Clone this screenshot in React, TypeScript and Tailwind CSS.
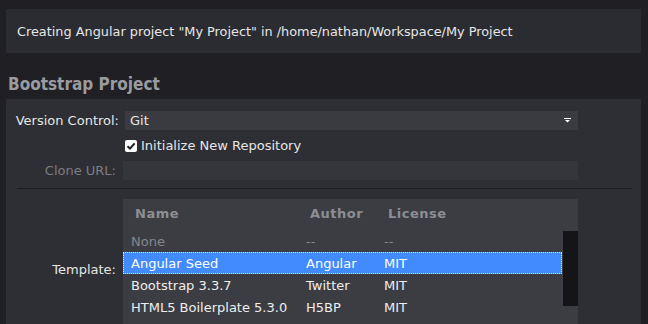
import React from "react"

const FONT = { fontFamily: '"DejaVu Sans", "Noto Sans", sans-serif' }
const HEAD = { fontFamily: '"DejaVu Sans Condensed", "Liberation Sans Narrow", "DejaVu Sans", sans-serif' }

const rows = [
  { name: "None", author: "--", license: "--", muted: true },
  { name: "Angular Seed", author: "Angular", license: "MIT", selected: true },
  { name: "Bootstrap 3.3.7", author: "Twitter", license: "MIT" },
  { name: "HTML5 Boilerplate 5.3.0", author: "H5BP", license: "MIT" },
]

function Caret() {
  return (
    <svg width="7" height="5" viewBox="0 0 7 5" className="shrink-0">
      <rect x="0" y="0" width="7" height="1" fill="#ffffff" />
      <path d="M1 2 H6 L3.5 4.5 Z" fill="#ffffff" />
    </svg>
  )
}

function CheckBox() {
  return (
    <div className="w-[12px] h-[12px] rounded-[2px] bg-white flex items-center justify-center">
      <svg width="10" height="10" viewBox="0 0 10 10">
        <path d="M1.5 5.2 L4 7.6 L8.6 2.4" stroke="#1c1c20" strokeWidth="2" fill="none" />
      </svg>
    </div>
  )
}

export default function App() {
  return (
    <div
      className="w-[648px] h-[324px] overflow-hidden bg-[#202024] flex flex-col text-[13px] text-[#e6e6e6]"
      style={FONT}
    >
      {/* Status */}
      <div className="mt-[9px] ml-[6px] mr-[7px] h-[44px] bg-[#2b2c31] flex items-center pl-[11px] pt-[2px] shrink-0 text-[12.85px]">
        Creating Angular project "My Project" in /home/nathan/Workspace/My Project
      </div>

      {/* Heading */}
      <div className="h-[46px] flex items-end pb-[2px] pl-[8px] shrink-0">
        <span className="text-[17px] font-bold text-[#9a9ba0]" style={HEAD}>
          Bootstrap Project
        </span>
      </div>

      {/* Panel */}
      <div className="flex-1 ml-[6px] mr-[7px] bg-[#2e2f34] pt-[12px] flex flex-col">
        <div className="flex items-center h-[19px]">
          <div className="w-[113px] text-right">Version Control:</div>
          <div className="ml-[6px] w-[453px] h-[19px] bg-[#3a3b40] flex items-center justify-between pl-[5px] pr-[7px]">
            <span>Git</span>
            <Caret />
          </div>
        </div>

        <div className="flex items-center h-[13px] mt-[9px] pl-[119px] gap-[4px]">
          <CheckBox />
          <span>Initialize New Repository</span>
        </div>

        <div className="flex items-center h-[19px] mt-[9px]">
          <div className="w-[110px] text-right text-[#7c7d82]">Clone URL:</div>
          <div className="ml-[7px] w-[455px] h-[19px] bg-[#35363b]" />
        </div>

        <div className="mt-[8px] ml-[11px] mr-[9px] h-px bg-[#1e1e22]" />

        <div className="flex items-center mt-[10px]">
          <div className="w-[110px] text-right">Template:</div>
          <div className="ml-[7px] w-[455px] h-[142px] bg-[#3c3d43] relative">
            <div className="flex items-center h-[30px] font-bold text-[#8d8e93] tracking-[0.5px]">
              <div className="w-[183px] pl-[12px]">Name</div>
              <div className="w-[78px] pl-[4px]">Author</div>
              <div className="pl-[4px]">License</div>
            </div>
            <div className="pt-[1px]">
              {rows.map((r) => (
                <div
                  key={r.name}
                  className={
                    r.selected
                      ? "flex items-center h-[22px] w-[439px] bg-[#418bff] text-white outline-1 outline-dotted outline-[#f3e6b0] -outline-offset-1"
                      : r.muted
                        ? "flex items-center h-[22px] w-[439px] text-[#85868b]"
                        : "flex items-center h-[22px] w-[439px] text-[#eeeeee]"
                  }
                >
                  <div className="w-[183px] pl-[8px] pt-[1px]">{r.name}</div>
                  <div className="w-[78px] pt-[1px]">{r.author}</div>
                  <div className="pt-[1px]">{r.license}</div>
                </div>
              ))}
            </div>
            <div className="absolute left-[440px] top-[32px] w-[15px] h-[75px] bg-[#151517]" />
          </div>
        </div>
      </div>
    </div>
  )
}
